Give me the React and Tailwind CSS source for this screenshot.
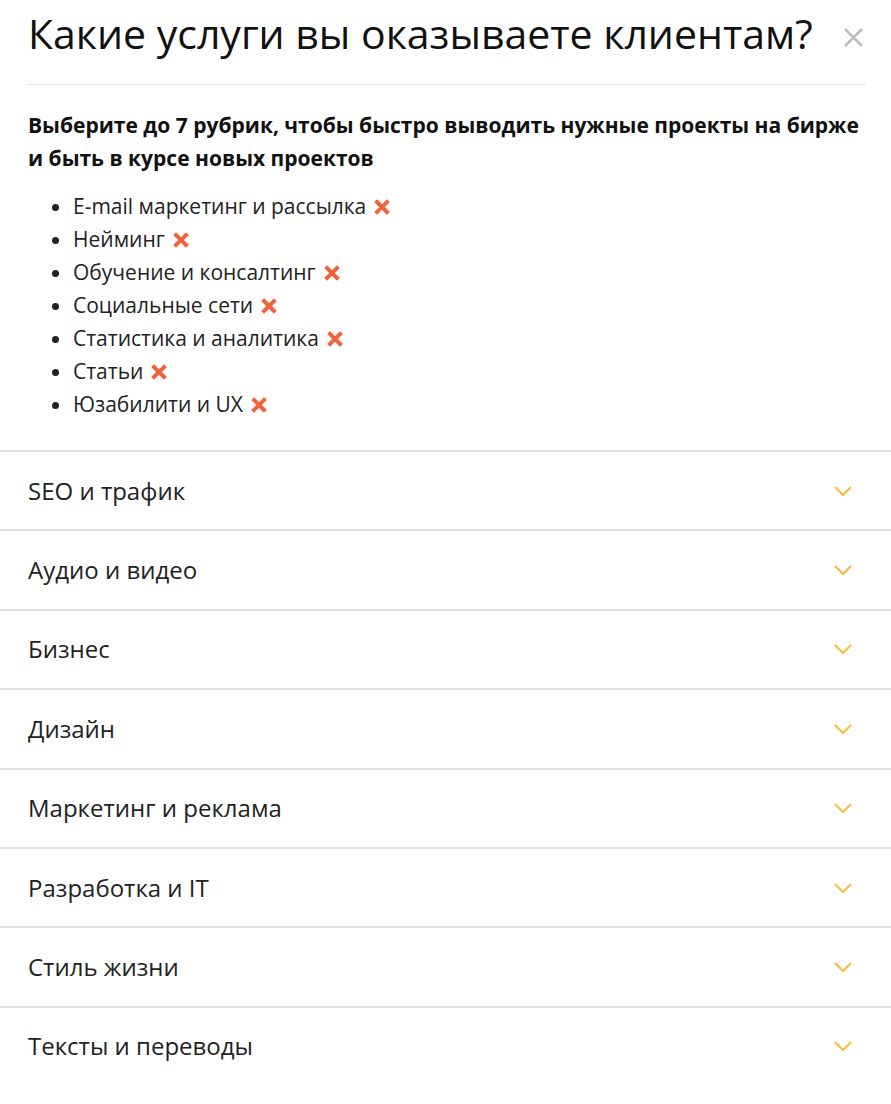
import React from 'react';

const picked = [
  'E-mail маркетинг и рассылка',
  'Нейминг',
  'Обучение и консалтинг',
  'Социальные сети',
  'Статистика и аналитика',
  'Статьи',
  'Юзабилити и UX',
];

const groups = [
  'SEO и трафик',
  'Аудио и видео',
  'Бизнес',
  'Дизайн',
  'Маркетинг и реклама',
  'Разработка и IT',
  'Стиль жизни',
  'Тексты и переводы',
];

function RemoveIcon() {
  return (
    <svg width="16" height="16" viewBox="0 0 16 16" className="ml-2 inline-block shrink-0">
      <path d="M3 3 L13 13 M13 3 L3 13" stroke="#f0643c" strokeWidth="4" strokeLinecap="square" />
    </svg>
  );
}

function Chevron() {
  return (
    <svg width="20" height="12" viewBox="0 0 20 12">
      <path d="M2 2 L10 10 L18 2" fill="none" stroke="#fdb93a" strokeWidth="2" />
    </svg>
  );
}

export default function App() {
  return (
    <div className="w-[891px] min-h-[1104px] bg-white text-[#111]" style={{ fontFamily: '"Open Sans", sans-serif' }}>
      <div className="pl-7 pr-[25px]">
        <div className="flex items-start justify-between pt-[5px] pb-[23px] border-b border-[#e5e5e5]">
          <h1 className="text-[41px] leading-[56px] font-normal">Какие услуги вы оказываете клиентам?</h1>
          <button className="mt-[22px] mr-[2px]">
            <svg width="21" height="21" viewBox="0 0 21 21">
              <path d="M2 2 L19 19 M19 2 L2 19" stroke="#bdbdbd" strokeWidth="2.5" />
            </svg>
          </button>
        </div>
        <p className="mt-[24px] text-[21px] leading-[33px] font-bold">
          Выберите до 7 рубрик, чтобы быстро выводить нужные проекты на бирже и быть в курсе новых проектов
        </p>
        <ul className="mt-[15px] pl-[45px] pb-[29px] list-disc text-[21px] leading-[33px] text-[#222]">
          {picked.map((name) => (
            <li key={name}>
              <span className="inline-flex items-center">
                {name}
                <RemoveIcon />
              </span>
            </li>
          ))}
        </ul>
      </div>
      <div>
        {groups.map((name) => (
          <div key={name} className="flex h-[79.4px] items-center justify-between border-t-2 border-[#e0e0e0] pl-7 pr-[38px]">
            <span className="text-[24px] text-[#222]">{name}</span>
            <Chevron />
          </div>
        ))}
      </div>
    </div>
  );
}
